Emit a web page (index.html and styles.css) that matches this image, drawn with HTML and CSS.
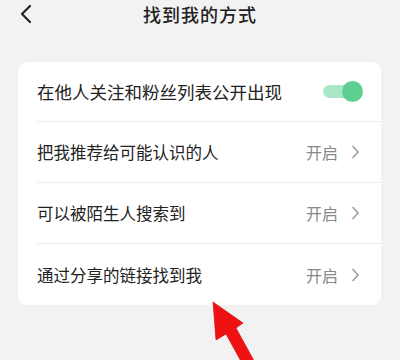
FILE: index.html
```html
<!DOCTYPE html>
<html lang="zh-CN">
<head>
    <meta charset="UTF-8">
    <meta name="viewport" content="width=device-width, initial-scale=1.0">
    <title>找到我的方式</title>
    <link rel="stylesheet" href="styles.css">
</head>
<body>
    <div class="page">
        <div class="nav-bar">
            <svg class="back" width="14" height="20" viewBox="0 0 14 20">
                <path d="M11 2 L3 10 L11 18" fill="none" stroke="#222" stroke-width="2.2" stroke-linecap="round" stroke-linejoin="round"/>
            </svg>
            <div class="title">找到我的方式</div>
        </div>

        <div class="card">
            <div class="row row-first">
                <span class="label label-wide">在他人关注和粉丝列表公开出现</span>
                <div class="switch on">
                    <div class="switch-knob"></div>
                </div>
            </div>
            <div class="row">
                <span class="label">把我推荐给可能认识的人</span>
                <span class="value">开启</span>
                <svg class="arrow-right" width="10" height="14" viewBox="0 0 10 14">
                    <path d="M3 1.5 L8 7 L3 12.5" fill="none" stroke="#999" stroke-width="1.5" stroke-linecap="round" stroke-linejoin="round"/>
                </svg>
            </div>
            <div class="row">
                <span class="label">可以被陌生人搜索到</span>
                <span class="value">开启</span>
                <svg class="arrow-right" width="10" height="14" viewBox="0 0 10 14">
                    <path d="M3 1.5 L8 7 L3 12.5" fill="none" stroke="#999" stroke-width="1.5" stroke-linecap="round" stroke-linejoin="round"/>
                </svg>
            </div>
            <div class="row row-last">
                <span class="label">通过分享的链接找到我</span>
                <span class="value">开启</span>
                <svg class="arrow-right" width="10" height="14" viewBox="0 0 10 14">
                    <path d="M3 1.5 L8 7 L3 12.5" fill="none" stroke="#999" stroke-width="1.5" stroke-linecap="round" stroke-linejoin="round"/>
                </svg>
            </div>
        </div>

        <!-- 标注用的红色箭头 -->
        <svg class="mark" width="400" height="360" viewBox="0 0 400 360">
            <polygon points="213,302 243,323 236,328 258,368 248,374 226,334 216,340" fill="#f01212" stroke="#c00" stroke-width="0.6"/>
        </svg>
    </div>
</body>
</html>
```

FILE: styles.css
```css
*{
    margin: 0;
    padding: 0;
    box-sizing: border-box;
}
body {
    background-color: #f2f2f2;
    font-family: "Liberation Sans", "Noto Sans CJK SC", sans-serif;
    color: #222;
}
.page {
    position: relative;
    width: 400px;
    height: 360px;
    overflow: hidden;
}
.nav-bar {
    position: relative;
    height: 28px;
    display: flex;
    align-items: center;
    justify-content: center;
}
.back {
    position: absolute;
    left: 19px;
    top: 4px;
}
.title {
    font-size: 18px;
    font-weight: 500;
    letter-spacing: 1px;
    color: #222;
}
.card {
    margin: 34px 19px 0 18px;
    padding-left: 19px;
    background-color: #fff;
    border-radius: 9px;
}
.row {
    height: 61px;
    display: flex;
    align-items: center;
    padding-right: 21px;
    border-bottom: 1px solid #ececec;
}
.row-first {
    height: 60px;
    padding-right: 18px;
}
.row-last {
    border-bottom: none;
}
.label {
    flex: 1;
    font-size: 16.5px;
    color: #222;
}
.label-wide {
    font-size: 17.5px;
}
.value {
    font-size: 16px;
    color: #888;
    margin-right: 12px;
}
.arrow-right {
    display: block;
}
/* 开关 */
.switch {
    position: relative;
    width: 40px;
    height: 21px;
}
.switch::before {
    content: "";
    position: absolute;
    left: 0;
    top: 4px;
    width: 36px;
    height: 13px;
    border-radius: 7px;
    background-color: #a9e7c6;
}
.switch-knob {
    position: absolute;
    right: 0;
    top: 0;
    width: 21px;
    height: 21px;
    border-radius: 50%;
    background-color: #5dcf90;
}
.mark {
    position: absolute;
    left: 0;
    top: 0;
    pointer-events: none;
}
```
